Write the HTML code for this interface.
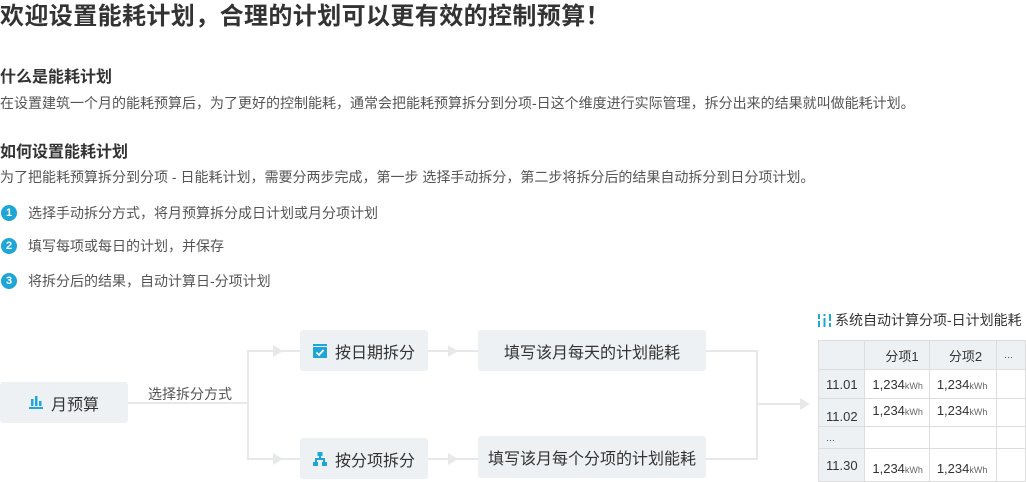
<!DOCTYPE html>
<html><head><meta charset="utf-8"><style>
*{margin:0;padding:0;box-sizing:border-box}
body{width:1026px;height:480px;background:#fff;position:relative;overflow:hidden;font-family:"Liberation Sans","Noto Sans CJK SC",sans-serif;color:#444}
.a{position:absolute;white-space:nowrap}
h1{position:absolute;left:0;top:2px;font-size:24px;font-weight:bold;color:#333;line-height:30px;letter-spacing:0.4px}
.h{font-size:16px;font-weight:bold;color:#333;line-height:20px}
.p{font-size:14px;color:#555;line-height:20px}
.b{position:absolute;left:1px;width:16px;height:16px;border-radius:50%;background:#1ea6d6;color:#fff;font-size:11px;font-weight:bold;text-align:center;line-height:16px}
.box{position:absolute;background:#eef1f4;border-radius:3px;font-size:16px;color:#333;display:flex;align-items:center;justify-content:center;gap:8px}
.l{position:absolute;background:#e6e8ea}
.ar{position:absolute;width:0;height:0;border-top:6px solid transparent;border-bottom:6px solid transparent;border-left:10px solid #e6e8ea}
table{position:absolute;left:818px;top:340px;border-collapse:collapse;font-size:13px;color:#333}
td{border:1px solid #ddd;padding:0 0 0 7px}
.u{font-size:9px;color:#666}
</style></head><body>
<h1>欢迎设置能耗计划，合理的计划可以更有效的控制预算！</h1>
<div class="a h" style="left:0;top:68px">什么是能耗计划</div>
<div class="a p" style="left:0;top:93px">在设置建筑一个月的能耗预算后，为了更好的控制能耗，通常会把能耗预算拆分到分项-日这个维度进行实际管理，拆分出来的结果就叫做能耗计划。</div>
<div class="a h" style="left:0;top:143px">如何设置能耗计划</div>
<div class="a p" style="left:0;top:167px">为了把能耗预算拆分到分项 - 日能耗计划，需要分两步完成，第一步 选择手动拆分，第二步将拆分后的结果自动拆分到日分项计划。</div>
<div class="b" style="top:205px">1</div><div class="a p" style="left:28px;top:203px">选择手动拆分方式，将月预算拆分成日计划或月分项计划</div>
<div class="b" style="top:238px">2</div><div class="a p" style="left:28px;top:236px">填写每项或每日的计划，并保存</div>
<div class="b" style="top:273px">3</div><div class="a p" style="left:28px;top:271px">将拆分后的结果，自动计算日-分项计划</div>

<div class="l" style="left:128px;top:402px;width:120px;height:2px"></div>
<div class="l" style="left:247px;top:350px;width:2px;height:110px"></div>
<div class="l" style="left:247px;top:350px;width:53px;height:2px"></div>
<div class="l" style="left:247px;top:458px;width:53px;height:2px"></div>
<div class="ar" style="left:273px;top:345px"></div>
<div class="ar" style="left:273px;top:453px"></div>
<div class="l" style="left:428px;top:350px;width:50px;height:2px"></div>
<div class="l" style="left:428px;top:458px;width:50px;height:2px"></div>
<div class="ar" style="left:448px;top:345px"></div>
<div class="ar" style="left:448px;top:453px"></div>
<div class="l" style="left:706px;top:350px;width:52px;height:2px"></div>
<div class="l" style="left:706px;top:458px;width:52px;height:2px"></div>
<div class="l" style="left:756px;top:350px;width:2px;height:110px"></div>
<div class="l" style="left:756px;top:403px;width:50px;height:2px"></div>
<div class="ar" style="left:800px;top:398px"></div>
<div class="a" style="left:148px;top:384px;font-size:14px;color:#555">选择拆分方式</div>

<div class="box" style="left:0;top:382px;width:128px;height:41px"><svg width="14" height="13" viewBox="0 0 14 13"><rect x="2" y="3" width="2.5" height="7" fill="#1ea6d6"/><rect x="6" y="0" width="2.5" height="10" fill="#1ea6d6"/><rect x="10" y="5" width="2.5" height="5" fill="#1ea6d6"/><rect x="0" y="11" width="14" height="2" fill="#1ea6d6"/></svg>月预算</div>
<div class="box" style="left:300px;top:330px;width:128px;height:41px"><svg width="14" height="14" viewBox="0 0 14 14"><rect x="0" y="0" width="14" height="2" fill="#1ea6d6"/><rect x="0" y="3" width="14" height="11" fill="#1ea6d6"/><path d="M3.5 8.5l2.5 2.5 4.5-5" stroke="#fff" stroke-width="1.8" fill="none"/></svg>按日期拆分</div>
<div class="box" style="left:300px;top:438px;width:128px;height:41px"><svg width="14" height="14" viewBox="0 0 14 14"><rect x="4.5" y="0" width="5" height="4" fill="#1ea6d6"/><rect x="6" y="4" width="2" height="3" fill="#1ea6d6"/><rect x="2" y="6" width="10" height="2" fill="#1ea6d6"/><rect x="2" y="6" width="2" height="4" fill="#1ea6d6"/><rect x="10" y="6" width="2" height="4" fill="#1ea6d6"/><rect x="0" y="10" width="5" height="4" fill="#1ea6d6"/><rect x="9" y="10" width="5" height="4" fill="#1ea6d6"/></svg>按分项拆分</div>
<div class="box" style="left:478px;top:330px;width:228px;height:41px">填写该月每天的计划能耗</div>
<div class="box" style="left:478px;top:436px;width:228px;height:42px">填写该月每个分项的计划能耗</div>

<div class="a" style="left:818px;top:310px;font-size:14px;color:#333;display:flex;align-items:center;gap:4px"><svg width="13" height="13" viewBox="0 0 13 13" fill="#1ea6d6"><rect x="0" y="0" width="2" height="5"/><rect x="0" y="7" width="2" height="6"/><rect x="5.5" y="0" width="2" height="2"/><rect x="5.5" y="4" width="2" height="9"/><rect x="11" y="0" width="2" height="7"/><rect x="11" y="9" width="2" height="4"/></svg>系统自动计算分项-日计划能耗</div>
<table>
<tr style="height:29px;background:#eef1f4"><td style="width:47px"></td><td style="width:65px;padding-left:20px">分项1</td><td style="width:68px;padding-left:19px">分项2</td><td style="width:30px;font-size:9px">…</td></tr>
<tr style="height:29px"><td style="background:#eef1f4">11.01</td><td>1,234<span class="u">kWh</span></td><td>1,234<span class="u">kWh</span></td><td></td></tr>
<tr style="height:28px"><td style="background:#eef1f4;padding-top:8px">11.02</td><td style="vertical-align:top;padding-top:4px">1,234<span class="u">kWh</span></td><td style="vertical-align:top;padding-top:4px">1,234<span class="u">kWh</span></td><td></td></tr>
<tr style="height:22px"><td style="background:#eef1f4;font-size:9px">…</td><td></td><td></td><td></td></tr>
<tr style="height:33px"><td style="background:#eef1f4">11.30</td><td style="padding-top:6px">1,234<span class="u">kWh</span></td><td style="padding-top:6px">1,234<span class="u">kWh</span></td><td></td></tr>
</table>
</body></html>
